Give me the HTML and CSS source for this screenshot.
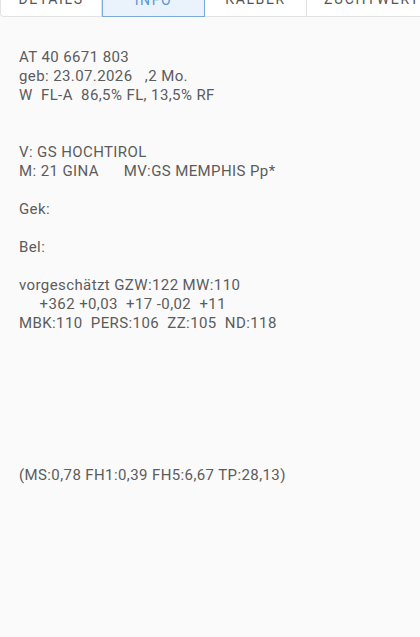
FILE: index.html
```html
<!DOCTYPE html>
<html lang="de">
<head>
<meta charset="utf-8">
<link rel="stylesheet" href="styles.css">
</head>
<body>
<div class="page">
  <nav class="tabs">
    <div class="tab first">DETAILS</div>
    <div class="tab active">INFO</div>
    <div class="tab">KÄLBER</div>
    <div class="tab last">ZUCHTWERTE</div>
  </nav>
  <pre class="info">AT 40 6671 803
geb: 23.07.2026   ,2 Mo.
W  FL-A  86,5% FL, 13,5% RF


V: GS HOCHTIROL
M: 21 GINA      MV:GS MEMPHIS Pp*

Gek:

Bel:

vorgeschätzt GZW:122 MW:110
     +362 +0,03  +17 -0,02  +11
MBK:110  PERS:106  ZZ:105  ND:118







(MS:0,78 FH1:0,39 FH5:6,67 TP:28,13)</pre>
</div>
</body>
</html>
```
FILE: styles.css
```css
html, body {
  margin: 0;
  padding: 0;
  background: #fafafa;
}
.page {
  width: 420px;
  height: 637px;
  overflow: hidden;
  font-family: Roboto, "Noto Sans", sans-serif;
}
.tabs {
  display: flex;
  height: 48px;
  margin-top: -31px;
  background: #ffffff;
  border-bottom: 1px solid #e2e2e2;
  border-left: 1px solid #e2e2e2;
  border-bottom-left-radius: 4px;
  box-sizing: border-box;
  white-space: nowrap;
}
.tab {
  flex: none;
  width: 102px;
  box-sizing: border-box;
  display: flex;
  align-items: center;
  justify-content: center;
  padding-top: 13px;
  font-size: 14px;
  letter-spacing: 1.6px;
  color: #555;
  border-right: 1px solid #e2e2e2;
}
.tab.first {
  width: 101px;
}
.tab.active {
  width: 103px;
  color: #5b96d6;
  background: #eaf2fb;
  border: 1px solid #7aa8dc;
  margin-bottom: -1px;
}
.tab.last {
  width: 140px;
  justify-content: flex-start;
  padding-left: 17px;
  border-right: none;
}
.info {
  margin: 0;
  padding: 31px 0 0 19px;
  font-family: Roboto, "Noto Sans", sans-serif;
  font-size: 15px;
  line-height: 19px;
  letter-spacing: 0.4px;
  color: #5c5c5c;
  white-space: pre;
}
```
